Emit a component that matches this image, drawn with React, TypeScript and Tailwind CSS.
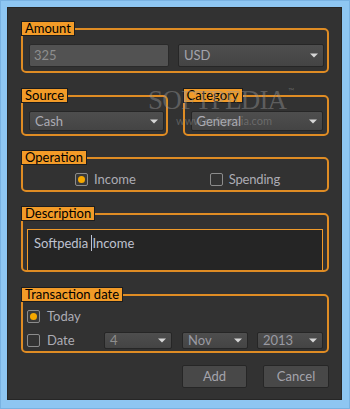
import React from 'react';

const font = "font-['Lato','Noto_Sans',sans-serif]";

function Arrow() {
  return (
    <svg width="8" height="5" viewBox="0 0 8 5" className="shrink-0">
      <path d="M0 0.5 H8 L4 4.5 Z" fill="#d6d6d6" />
    </svg>
  );
}

function Select({ value, className = '', h = 'h-[20px]', text = 'text-[#acacb4]' }: { value: string; className?: string; h?: string; text?: string }) {
  return (
    <div
      className={`flex items-center justify-between rounded-[2px] border border-[#262626] bg-gradient-to-b from-[#4e4e4e] to-[#444444] pl-[5px] pr-[5px] text-[13px] ${text} ${h} ${className}`}
    >
      <span className="leading-none">{value}</span>
      <Arrow />
    </div>
  );
}

function Group({ label, className = '', boxClass = '', children }: { label: string; className?: string; boxClass?: string; children?: React.ReactNode }) {
  return (
    <div className={`relative pt-[7px] ${className}`}>
      <span className="absolute left-0 top-0 z-10 flex h-[15px] items-center border border-[#1d1d1d] bg-[#f29b28] px-[3px] text-[13px] leading-none text-black">
        {label}
      </span>
      <div className={`rounded-[5px] border-2 border-[#df8c24] ${boxClass}`}>{children}</div>
    </div>
  );
}

function Radio({ checked }: { checked?: boolean }) {
  return (
    <span className="flex h-[13px] w-[13px] shrink-0 items-center justify-center rounded-[2px] border border-[#8c8c8c] bg-[#3a3a3a]">
      {checked && <span className="h-[7px] w-[7px] rounded-full bg-[#f5a800]" />}
    </span>
  );
}

function Check() {
  return <span className="h-[13px] w-[13px] shrink-0 rounded-[2px] border border-[#8c8c8c] bg-[#333333]" />;
}

export default function App() {
  return (
    <div className={`h-[409px] w-[350px] overflow-hidden border border-[#79b2e2] bg-[#8ec6f2] pb-[8px] pl-[6px] pr-[7px] pt-[6px] ${font}`}>
      <div className="relative flex h-[393px] flex-col border border-[#262626] bg-[#323232] pl-[13px] pr-[12px] pt-[13px]">
        {/* Amount */}
        <Group label="Amount" boxClass="flex gap-[9px] pb-[4px] pl-[6px] pr-[3px] pt-[14px]">
          <div className="flex h-[23px] flex-1 items-center rounded-[2px] border border-[#2a2a2a] bg-[#525252] pl-[4px] text-[13px] text-[#8e8e8e]">
            325
          </div>
          <Select value="USD" h="h-[23px]" className="flex-1" text="text-[#a4a4ac]" />
        </Group>

        {/* Source / Category */}
        <div className="mt-[15px] flex gap-[15px]">
          <Group label="Source" className="flex-1" boxClass="pb-[3px] pl-[6px] pr-[2px] pt-[14px]">
            <Select value="Cash" />
          </Group>
          <Group label="Category" className="flex-1" boxClass="pb-[3px] pl-[6px] pr-[4px] pt-[14px]">
            <Select value="General" />
          </Group>
        </div>

        {/* Operation */}
        <Group label="Operation" className="mt-[14px]" boxClass="flex items-center pb-[4px] pl-[52px] pt-[14px]">
          <div className="flex h-[13px] items-center gap-[6px] text-[13px] text-[#acacb4]">
            <Radio checked />
            <span>Income</span>
          </div>
          <div className="ml-[74px] flex h-[13px] items-center gap-[6px] text-[13px] text-[#acacb4]">
            <Check />
            <span className="tracking-[-0.2px]">Spending</span>
          </div>
        </Group>

        {/* Description */}
        <Group label="Description" className="mt-[14px]" boxClass="px-[4px] pt-[14px]">
          <div className="h-[41px] border border-b-0 border-[#ef9a2a] bg-[#252525] pl-[6px] pt-[5px] text-[13px] leading-[16px] text-[#bfc2d0]">
            Softpedia <span className="border-l border-[#bfc2d0]">Income</span>
          </div>
        </Group>

        {/* Transaction date */}
        <Group label="Transaction date" className="mt-[15px]" boxClass="flex flex-col gap-[9px] pb-[2px] pl-[4px] pr-[4px] pt-[14px]">
          <div className="flex h-[13px] items-center gap-[7px] text-[13px] text-[#acacb4]">
            <Radio checked />
            <span>Today</span>
          </div>
          <div className="flex h-[17px] items-center text-[13px] text-[#acacb4]">
            <div className="flex w-[77px] items-center gap-[7px]">
              <Check />
              <span>Date</span>
            </div>
            <Select value="4" h="h-[17px]" className="w-[68px]" text="text-[#8e8e8e]" />
            <Select value="Nov" h="h-[17px]" className="ml-[10px] w-[66px]" text="text-[#9a9aa2]" />
            <Select value="2013" h="h-[17px]" className="ml-[9px] w-[66px]" text="text-[#9a9aa2]" />
          </div>
        </Group>

        {/* Buttons */}
        <div className="mt-[12px] flex justify-end gap-[16px]">
          <button className="h-[23px] w-[65px] rounded-[2px] border border-[#262626] bg-[#484848] text-[13px] text-[#a4a4ac]">
            Add
          </button>
          <button className="h-[23px] w-[66px] rounded-[2px] border border-[#262626] bg-[#484848] text-[13px] text-[#a4a4ac]">
            Cancel
          </button>
        </div>

        {/* watermark */}
        <div className="pointer-events-none absolute left-[140px] top-[77px] z-20 select-none text-[rgba(150,150,150,0.45)]">
          <div className="flex items-start">
            <span className="font-['Liberation_Serif',serif] text-[27px] leading-[30px] tracking-[-0.8px]">SOFTPEDIA</span>
            <span className="ml-[2px] text-[8px]">™</span>
          </div>
          <div className="ml-[28px] text-[11px] leading-[12px]">www.softpedia.com</div>
        </div>
      </div>
    </div>
  );
}
